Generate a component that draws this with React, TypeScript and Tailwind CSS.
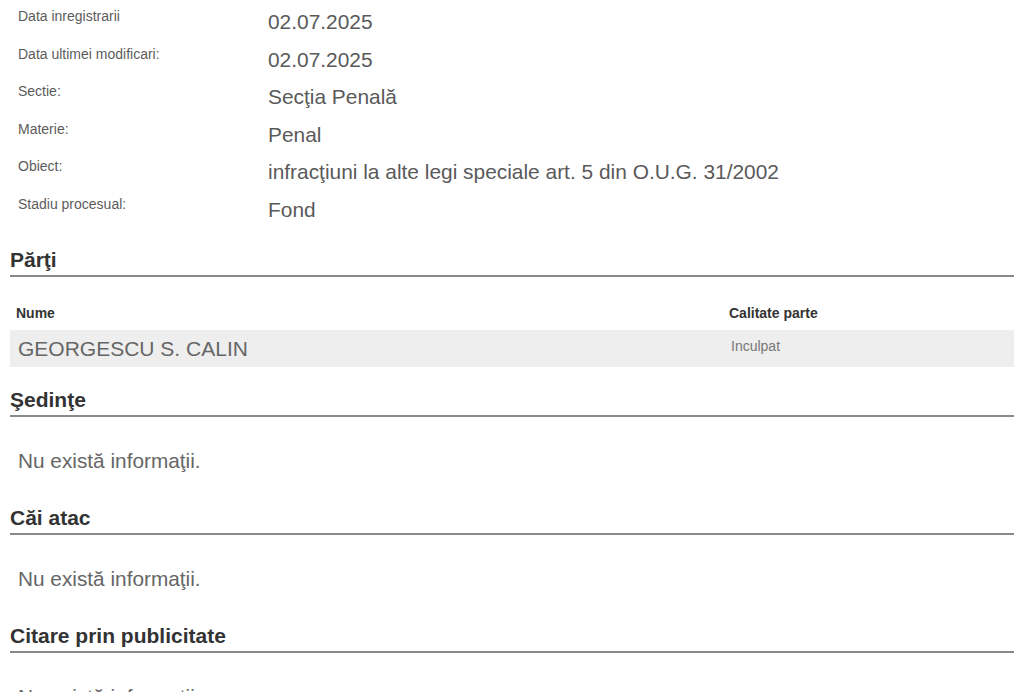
import React from "react";

const rows: [string, string][] = [
  ["Data inregistrarii", "02.07.2025"],
  ["Data ultimei modificari:", "02.07.2025"],
  ["Sectie:", "Secţia Penală"],
  ["Materie:", "Penal"],
  ["Obiect:", "infracţiuni la alte legi speciale art. 5 din O.U.G. 31/2002"],
  ["Stadiu procesual:", "Fond"],
];

function Heading({ title, mt }: { title: string; mt: string }) {
  return (
    <div className={`${mt} border-b-2 border-[#8a8a8a] pb-[3px]`}>
      <h2 className="text-[21px] leading-[24px] font-bold text-[#333]">{title}</h2>
    </div>
  );
}

function Empty({ mt }: { mt: string }) {
  return (
    <div className={`${mt} pl-2 text-[20.8px] leading-[24px] text-[#666]`}>
      Nu există informaţii.
    </div>
  );
}

export default function App() {
  return (
    <div
      className="bg-white px-[10px] w-[1024px]"
      style={{ fontFamily: '"Liberation Sans", Arial, Helvetica, sans-serif' }}
    >
      <div>
        {rows.map(([l, v]) => (
          <div key={l} className="flex items-start h-[37.5px]">
            <div className="w-[258px] pl-2 pt-[8px] text-[14px] leading-[16px] text-[#5c5c5c]">{l}</div>
            <div className="pt-[10px] text-[20.9px] leading-[24px] text-[#5a5a5a]">{v}</div>
          </div>
        ))}
      </div>

      <Heading title="Părţi" mt="mt-[23px]" />

      <div className="mt-[28px]">
        <div className="flex text-[14px] leading-[16px] font-bold text-[#333]">
          <div className="w-[713px] pl-[6px]">Nume</div>
          <div className="pl-[6px]">Calitate parte</div>
        </div>
        <div className="mt-[9px] flex h-[37px] bg-[#eeeeee]">
          <div className="w-[713px] pl-2 pt-[7px] text-[21px] leading-[24px] text-[#666]">GEORGESCU S. CALIN</div>
          <div className="pl-2 pt-[8px] text-[14px] leading-[16px] text-[#777]">Inculpat</div>
        </div>
      </div>

      <Heading title="Şedinţe" mt="mt-[21px]" />
      <Empty mt="mt-[32px]" />

      <Heading title="Căi atac" mt="mt-[33px]" />
      <Empty mt="mt-[32px]" />

      <Heading title="Citare prin publicitate" mt="mt-[33px]" />
      <Empty mt="mt-[32px]" />
      <div className="h-[40px]" />
    </div>
  );
}
